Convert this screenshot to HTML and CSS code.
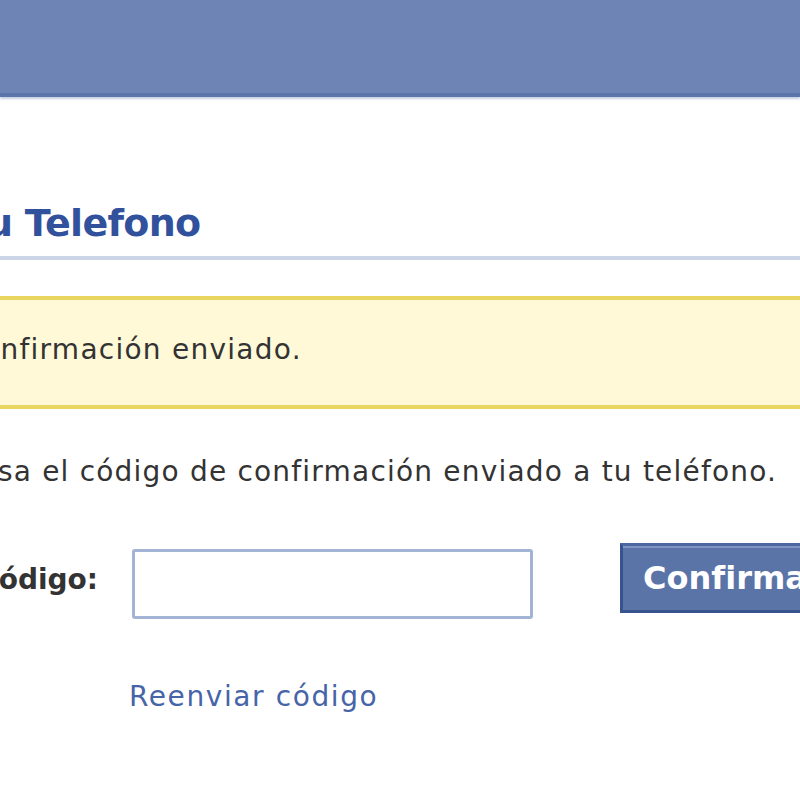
FILE: index.html
```html
<!DOCTYPE html>
<html lang="es">
<head>
<meta charset="utf-8">
<title>Confirma tu Telefono</title>
<link rel="stylesheet" href="styles.css">
</head>
<body>
<header class="topbar"></header>
<main class="page">
  <h2 class="title">Confirma tu Telefono</h2>
  <div class="notice">
    <p class="notice-text">Código de confirmación enviado.</p>
  </div>
  <p class="intro">Ingresa el código de confirmación enviado a tu teléfono.</p>
  <form class="confirm-form">
    <label class="field-label" for="code">Código:</label>
    <input class="code-input" id="code" type="text">
    <button class="btn-confirm" type="button">Confirmar</button>
  </form>
  <a class="resend" href="#">Reenviar código</a>
</main>
</body>
</html>
```
FILE: styles.css
```css
html, body {
  margin: 0;
  padding: 0;
  background: #ffffff;
  overflow: hidden;
}
body {
  width: 800px;
  height: 800px;
  font-family: "DejaVu Sans", "Liberation Sans", sans-serif;
  color: #333333;
}
.topbar {
  height: 93px;
  background: #6d84b4;
  border-bottom: 4px solid #5c74a9;
  box-shadow: 0 2px 2px rgba(93, 117, 170, 0.35);
}
.page {
  margin-left: -240px;
  width: 1300px;
  padding-top: 104px;
}
.title {
  margin: 0;
  padding: 0 0 11px 7px;
  font-size: 38px;
  line-height: 44px;
  font-weight: bold;
  letter-spacing: -0.7px;
  color: #31519c;
  border-bottom: 4px solid #ccd4e7;
}
.notice {
  margin-top: 36px;
  background: #fff9d7;
  border-top: 4px solid #e9d65e;
  border-bottom: 4px solid #e9d65e;
  padding: 33px 0 38px 43px;
}
.notice-text {
  margin: 0;
  font-size: 28px;
  line-height: 34px;
  letter-spacing: 1.25px;
}
.intro {
  margin: 46px 0 0 0;
  padding-left: 160px;
  font-size: 28px;
  line-height: 34px;
  letter-spacing: 1.2px;
}
.confirm-form {
  display: flex;
  align-items: flex-start;
  margin-top: 54px;
}
.field-label {
  width: 338px;
  text-align: right;
  margin-top: 20px;
  font-size: 28px;
  line-height: 34px;
  font-weight: bold;
  color: #333333;
}
.code-input {
  box-sizing: border-box;
  margin: 6px 0 0 34px;
  width: 401px;
  height: 70px;
  border: 3px solid #a3b3d3;
  border-radius: 3px;
  background: #ffffff;
  padding: 0 8px;
  font-size: 28px;
  outline: none;
}
.btn-confirm {
  box-sizing: border-box;
  margin-left: 87px;
  height: 70px;
  padding: 0 20px;
  background: #5b74a8;
  border: 3px solid #38548e;
  border-top-color: #4d67a0;
  box-shadow: inset 0 2px 0 #8096c2;
  color: #ffffff;
  font-family: "DejaVu Sans", "Liberation Sans", sans-serif;
  font-size: 32px;
  font-weight: bold;
  white-space: nowrap;
}
.resend {
  display: block;
  margin-top: 61px;
  padding-left: 369px;
  font-size: 28px;
  line-height: 34px;
  letter-spacing: 1.6px;
  color: #4664a8;
  text-decoration: none;
}
```
